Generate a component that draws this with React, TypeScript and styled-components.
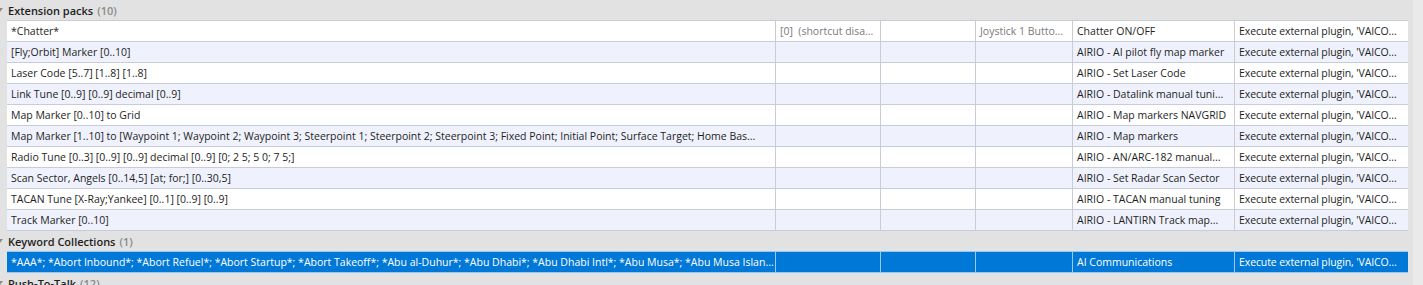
import styled, { createGlobalStyle } from "styled-components";

const GlobalStyle = createGlobalStyle`
  html, body {
    margin: 0;
    padding: 0;
    background: #e2e2e2;
    overflow: hidden;
  }
  body {
    font-family: "Open Sans", "Noto Sans", sans-serif;
    font-size: 10.5px;
    color: #1e1e1e;
  }
`;

type Row = string[];

const extensionRows: Row[] = [
  ["*Chatter*", "[0]\u00a0\u00a0(shortcut disa...", "", "Joystick 1 Butto...", "Chatter ON/OFF", "Execute external plugin, 'VAICO..."],
  ["[Fly;Orbit] Marker [0..10]", "", "", "", "AIRIO - AI pilot fly map marker", "Execute external plugin, 'VAICO..."],
  ["Laser Code [5..7] [1..8] [1..8]", "", "", "", "AIRIO - Set Laser Code", "Execute external plugin, 'VAICO..."],
  ["Link Tune [0..9] [0..9] decimal [0..9]", "", "", "", "AIRIO - Datalink manual tuni...", "Execute external plugin, 'VAICO..."],
  ["Map Marker [0..10] to Grid", "", "", "", "AIRIO - Map markers NAVGRID", "Execute external plugin, 'VAICO..."],
  [
    "Map Marker [1..10] to [Waypoint 1; Waypoint 2; Waypoint 3; Steerpoint 1; Steerpoint 2; Steerpoint 3; Fixed Point; Initial Point; Surface Target; Home Bas...",
    "", "", "", "AIRIO - Map markers", "Execute external plugin, 'VAICO...",
  ],
  ["Radio Tune [0..3] [0..9] [0..9] decimal [0..9] [0; 2 5; 5 0; 7 5;]", "", "", "", "AIRIO - AN/ARC-182 manual...", "Execute external plugin, 'VAICO..."],
  ["Scan Sector, Angels [0..14,5] [at; for;] [0..30,5]", "", "", "", "AIRIO - Set Radar Scan Sector", "Execute external plugin, 'VAICO..."],
  ["TACAN Tune [X-Ray;Yankee] [0..1] [0..9] [0..9]", "", "", "", "AIRIO - TACAN manual tuning", "Execute external plugin, 'VAICO..."],
  ["Track Marker [0..10]", "", "", "", "AIRIO - LANTIRN Track map...", "Execute external plugin, 'VAICO..."],
];

const keywordRows: Row[] = [
  [
    "*AAA*; *Abort Inbound*; *Abort Refuel*; *Abort Startup*; *Abort Takeoff*; *Abu al-Duhur*; *Abu Dhabi*; *Abu Dhabi Intl*; *Abu Musa*; *Abu Musa Islan...",
    "", "", "", "AI Communications", "Execute external plugin, 'VAICO...",
  ],
];

const columns = "769px 105px 95px 97px 162px 1fr";

function Group({ title, count, rows, selected }: { title: string; count: number; rows?: Row[]; selected?: number }) {
  return (
    <>
      <GroupHeader>
        <Arrow />
        <Title>{title}</Title>
        <Count>({count})</Count>
      </GroupHeader>
      {rows && (
        <Table>
          {rows.map((row, i) => (
            <TableRow key={i} $alt={i % 2 === 1} $selected={selected === i}>
              {row.map((cell, j) => (
                <Cell key={j} $muted={j === 1 || j === 3} $selected={selected === i}>
                  {cell}
                </Cell>
              ))}
            </TableRow>
          ))}
        </Table>
      )}
    </>
  );
}

export default function App() {
  return (
    <>
      <GlobalStyle />
      <Screen>
        <List>
          <Group title="Extension packs" count={10} rows={extensionRows} />
          <Group title="Keyword Collections" count={1} rows={keywordRows} selected={0} />
          <Group title="Push-To-Talk" count={12} />
        </List>
        <ScrollTrack />
      </Screen>
    </>
  );
}

const Screen = styled.div`
  display: flex;
  width: 1423px;
  height: 285px;
  overflow: hidden;
  background: #e2e2e2;
`;

const List = styled.div`
  flex: 1;
  display: flex;
  flex-direction: column;
  padding-right: 5px;
  & > * {
    flex-shrink: 0;
  }
`;

const ScrollTrack = styled.div`
  width: 10px;
  background: #eaeaea;
`;

const GroupHeader = styled.div`
  display: flex;
  align-items: center;
  height: 20px;
  padding-left: 8px;
  position: relative;
  font-size: 11px;
  font-weight: 600;
  white-space: nowrap;
`;

const Arrow = styled.span`
  position: absolute;
  left: -3px;
  top: 8px;
  width: 0;
  height: 0;
  border-left: 3px solid transparent;
  border-right: 3px solid transparent;
  border-top: 4px solid #8c8c8c;
`;

const Title = styled.span`
  color: #1e1e1e;
`;

const Count = styled.span`
  color: #8a8a8a;
  margin-left: 4px;
`;

const Table = styled.div`
  margin-left: 7px;
  border-top: 1px solid #c8ccd6;
`;

const TableRow = styled.div<{ $alt: boolean; $selected: boolean }>`
  display: grid;
  grid-template-columns: ${columns};
  height: 20px;
  border-bottom: 1px solid ${(p) => (p.$selected ? "#99c9ef" : "#c8ccd6")};
  margin-top: ${(p) => (p.$selected ? "-1px" : "0")};
  border-top: ${(p) => (p.$selected ? "1px solid #99c9ef" : "none")};
  background: ${(p) => (p.$selected ? "#0078d7" : p.$alt ? "#eff2fc" : "#ffffff")};
`;

const Cell = styled.div<{ $muted: boolean; $selected: boolean }>`
  display: flex;
  align-items: center;
  padding: 0 0 0 4px;
  overflow: hidden;
  white-space: nowrap;
  border-right: 1px solid ${(p) => (p.$selected ? "#99c9ef" : "#c8ccd6")};
  color: ${(p) => (p.$selected ? "#ffffff" : p.$muted ? "#7a7a7a" : "#1e1e1e")};
  &:last-child {
    border-right: none;
    letter-spacing: -0.1px;
  }
`;
